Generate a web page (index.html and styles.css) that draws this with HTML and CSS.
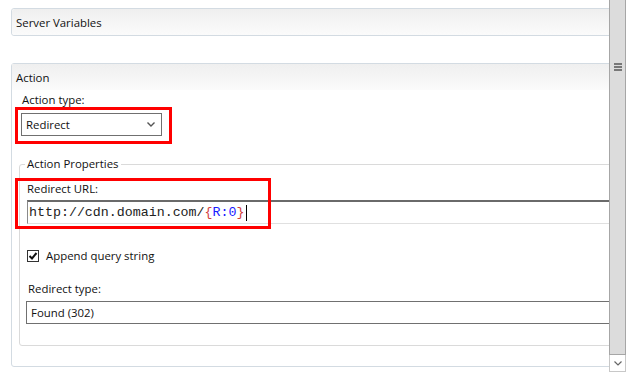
FILE: index.html
```html
<!DOCTYPE html>
<html lang="en">
<head>
    <meta charset="UTF-8">
    <meta name="viewport" content="width=device-width, initial-scale=1.0">
    <title>Edit Rule - Action</title>
    <link rel="stylesheet" href="styles.css">
</head>
<body>
    <div class="content">
        <div class="panel collapsed">
            <div class="panel-header">Server Variables</div>
        </div>

        <div class="panel">
            <div class="panel-header">Action</div>
            <div class="panel-body">
                <label class="field-label">Action type:</label>
                <div class="select short">
                    <span>Redirect</span>
                    <svg class="chevron" width="8" height="5" viewBox="0 0 8 5"><polyline points="0.5,0.5 4,4 7.5,0.5" fill="none" stroke="#555" stroke-width="1.4"/></svg>
                </div>

                <fieldset class="group">
                    <legend>Action Properties</legend>
                    <label class="field-label">Redirect URL:</label>
                    <div class="url-input">http://cdn.domain.com/<span class="brace">{</span><span class="token">R:0</span><span class="brace">}</span><span class="caret"></span></div>

                    <div class="check-row">
                        <svg class="checkbox" width="12" height="12" viewBox="0 0 12 12">
                            <rect x="0.5" y="0.5" width="11" height="11" fill="#fff" stroke="#333"/>
                            <polyline points="2.5,6 5,8.5 9.5,3" fill="none" stroke="#111" stroke-width="2"/>
                        </svg>
                        <span>Append query string</span>
                    </div>

                    <label class="field-label">Redirect type:</label>
                    <div class="select wide">
                        <span>Found (302)</span>
                    </div>
                </fieldset>
            </div>
        </div>
    </div>

    <div class="scrollbar">
        <div class="thumb">
            <div class="grip"><i></i><i></i><i></i></div>
        </div>
        <div class="arrow-down">
            <svg width="8" height="5" viewBox="0 0 8 5"><polyline points="0.5,0.5 4,4 7.5,0.5" fill="none" stroke="#666" stroke-width="1.2"/></svg>
        </div>
    </div>

    <!-- red annotation boxes -->
    <div class="mark mark-type"></div>
    <div class="mark mark-url"></div>
</body>
</html>
```

FILE: styles.css
```css
body {
    margin: 0;
    width: 631px;
    height: 372px;
    overflow: hidden;
    background: #fff;
    font-family: "Open Sans", "Liberation Sans", sans-serif;
    font-size: 11.4px;
    color: #111;
    display: flex;
    position: relative;
}

.content {
    width: 609px;
    overflow: hidden;
    padding: 8px 0 0 11px;
    box-sizing: border-box;
}

.panel {
    margin-right: -10px;
    border: 1px solid #d3dbe2;
    border-radius: 3px;
}

.panel + .panel {
    margin-top: 27px;
}

.panel-header {
    height: 26px;
    line-height: 27px;
    padding-left: 4px;
    background: linear-gradient(to bottom, #efefef, #fbfbfb);
}

.panel.collapsed .panel-header {
    border-radius: 3px;
}

.panel-body {
    padding: 2px 0 20px 7px;
}

.field-label {
    display: block;
    line-height: 16px;
}

.panel-body > .field-label {
    padding-left: 3px;
}

.select {
    height: 23px;
    box-sizing: border-box;
    border: 1px solid #707070;
    display: flex;
    align-items: center;
    padding-left: 4px;
    background: #fff;
}

.select.short {
    width: 141px;
    margin: 5px 0 0 2px;
    justify-content: space-between;
    padding-right: 6px;
}

.select.wide {
    margin: 4px 0 0 -1px;
    padding-left: 4px;
}

.group {
    margin: 20px 0 0 0;
    padding: 9px 0 21px 7px;
    border: 1px solid #dadada;
    border-radius: 3px;
}

.group legend {
    margin-left: -2px;
    padding: 0 2px;
    line-height: 16px;
}

.url-input {
    margin-top: 3px;
    height: 24px;
    box-sizing: border-box;
    border-top: 2px solid #6a6a6a;
    border-left: 1px solid #8a8a8a;
    border-bottom: 1px solid #e0e0e0;
    padding-left: 1px;
    font-family: "Liberation Mono", monospace;
    font-size: 13.3px;
    line-height: 20px;
    color: #222;
    display: flex;
    align-items: center;
    white-space: pre;
}

.brace {
    color: #d23c3c;
}

.token {
    color: #1a1aff;
}

.caret {
    width: 1px;
    height: 16px;
    background: #000;
    margin-left: 2px;
}

.check-row {
    margin-top: 24px;
    display: flex;
    align-items: center;
    line-height: 16px;
}

.checkbox {
    margin-right: 7px;
}

.check-row + .field-label {
    margin-top: 17px;
    padding-left: 1px;
}

.scrollbar {
    width: 17px;
    margin-right: 5px;
    display: flex;
    flex-direction: column;
}

.thumb {
    flex: 1;
    background: #dcdcdc;
    border: 1px solid #a6a6a6;
    border-top: none;
    padding-top: 63px;
}

.grip {
    width: 8px;
    margin-left: 4px;
    display: flex;
    flex-direction: column;
    gap: 1px;
}

.grip i {
    height: 2px;
    background: #777;
}

.arrow-down {
    height: 17px;
    box-sizing: border-box;
    border: 1px solid #c8c8c8;
    border-top: none;
    display: flex;
    align-items: center;
    justify-content: center;
    background: #fff;
}

.mark {
    position: absolute;
    border: 3px solid #f00;
    box-sizing: border-box;
}

.mark-type {
    left: 15px;
    top: 107px;
    width: 157px;
    height: 37px;
}

.mark-url {
    left: 15px;
    top: 178px;
    width: 256px;
    height: 51px;
}
```
